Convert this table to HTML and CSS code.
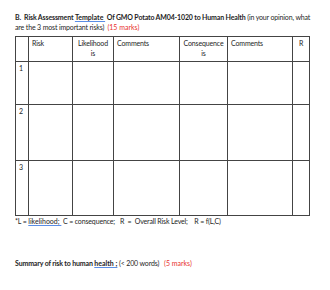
FILE: index.html
```html
<!DOCTYPE html>
<html>
<head>
<meta charset="utf-8">
<link rel="stylesheet" href="styles.css">
</head>
<body>
<div class="page">
  <p class="title"><b>B.&nbsp; Risk Assessment <span class="sq">Template&nbsp;</span> Of GMO Potato AM04-1020 to Human Health</b> (in your opinion, what are the 3 most important risks)&nbsp; <span class="red">(15 marks)</span></p>
  <table class="grid">
    <colgroup>
      <col class="c0"><col class="c1"><col class="c2"><col class="c3"><col class="c4"><col class="c5"><col class="c6">
    </colgroup>
    <tr class="head">
      <td></td>
      <td>Risk</td>
      <td class="ctr">Likelihood<br>is</td>
      <td>Comments</td>
      <td class="ctr">Consequence<br>is</td>
      <td>Comments</td>
      <td class="ctr">R</td>
    </tr>
    <tr class="r1"><td>1</td><td></td><td></td><td></td><td></td><td></td><td></td></tr>
    <tr class="r2"><td>2</td><td></td><td></td><td></td><td></td><td></td><td></td></tr>
    <tr class="r3"><td>3</td><td></td><td></td><td></td><td></td><td></td><td></td></tr>
  </table>
  <p class="note">*L = <span class="sq">likelihood;&nbsp;</span> C = consequence;&nbsp;&nbsp; R&nbsp; =&nbsp; Overall Risk Level;&nbsp;&nbsp;&nbsp; R = f(L,C)</p>
  <p class="summary"><b>Summary of risk to human <span class="sq">health ;</span></b> (&lt; 200 words)&nbsp;&nbsp; <span class="red">(5 marks)</span></p>
</div>
</body>
</html>
```
FILE: styles.css
```css
html, body {
  margin: 0;
  padding: 0;
  background: #fff;
}
.page {
  padding: 12px 0 0 15px;
  width: 300px;
  font-family: Lato, "Liberation Sans", sans-serif;
  font-size: 7px;
  letter-spacing: -0.15px;
  color: #1e1e1e;
}
.title {
  margin: 0;
  line-height: 10px;
}
.red {
  color: #e8322e;
  letter-spacing: 0;
}
.sq {
  letter-spacing: 0;
  text-decoration: underline;
  text-decoration-color: #5b8ee6;
  text-underline-offset: 1px;
}
.grid {
  margin-top: 4px;
  border-collapse: collapse;
  table-layout: fixed;
  width: 295px;
}
.grid td {
  border: 1px solid #444;
  vertical-align: top;
  padding: 1px 3px;
  line-height: 10px;
  font-size: 7px;
}
.grid .ctr { text-align: center; }
.c0 { width: 13px; }
.c1 { width: 44px; }
.c2 { width: 41px; }
.c3 { width: 66px; }
.c4 { width: 48px; }
.c5 { width: 65px; }
.c6 { width: 17px; }
.head td { height: 22px; }
.r1 td { height: 40px; }
.r2 td { height: 53px; }
.r3 td { height: 52px; }
.note {
  margin: 0;
  line-height: 10px;
}
.summary {
  margin: 32px 0 0;
  line-height: 10px;
}
```
